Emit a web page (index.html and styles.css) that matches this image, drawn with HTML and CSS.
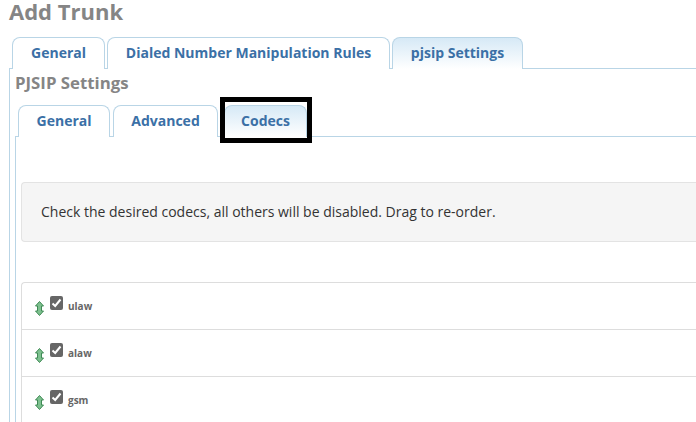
FILE: index.html
```html
<!DOCTYPE html>
<html>
<head>
<title>Add Trunk</title>
<link rel="stylesheet" href="styles.css">
</head>
<body>

<h2 class="page-title">Add Trunk</h2>

<ul class="tabs outer-tabs">
  <li class="tab tab-general">General</li>
  <li class="tab tab-dialed">Dialed Number Manipulation Rules</li>
  <li class="tab tab-pjsip active">pjsip Settings</li>
</ul>

<div class="outer-panel">
  <h3 class="panel-title">PJSIP Settings</h3>

  <ul class="tabs inner-tabs">
    <li class="tab tab-inner-general">General</li>
    <li class="tab tab-advanced">Advanced</li>
    <li class="tab tab-codecs active">Codecs<span class="highlight-box"></span></li>
  </ul>

  <div class="inner-panel">
    <div class="well">Check the desired codecs, all others will be disabled. Drag to re-order.</div>

    <ul class="codec-list">
      <li class="codec-row">
        <svg class="move-icon" viewBox="0 0 9 15"><path d="M4.500 .5 8.500 5H6.500v5h2L4.500 14.500 .5 10h2V5h-2z"/></svg>
        <span class="check"><svg viewBox="0 0 13 14"><path d="M2.500 7.500 5.200 10 10.500 3.500"/></svg></span>
        <span class="codec-name">ulaw</span>
      </li>
      <li class="codec-row">
        <svg class="move-icon" viewBox="0 0 9 15"><path d="M4.500 .5 8.500 5H6.500v5h2L4.500 14.500 .5 10h2V5h-2z"/></svg>
        <span class="check"><svg viewBox="0 0 13 14"><path d="M2.500 7.500 5.200 10 10.500 3.500"/></svg></span>
        <span class="codec-name">alaw</span>
      </li>
      <li class="codec-row">
        <svg class="move-icon" viewBox="0 0 9 15"><path d="M4.500 .5 8.500 5H6.500v5h2L4.500 14.500 .5 10h2V5h-2z"/></svg>
        <span class="check"><svg viewBox="0 0 13 14"><path d="M2.500 7.500 5.200 10 10.500 3.500"/></svg></span>
        <span class="codec-name">gsm</span>
      </li>
    </ul>
  </div>
</div>

</body>
</html>
```

FILE: styles.css
```css
:root {
  --tab-border: #b9d5e6;
  --tab-text: #3b70a6;
  --title-text: #858585;
}

html, body {
  height: 100%;
  overflow: hidden;
}

body {
  margin: 0;
  padding: 0 0 0 9px;
  background-color: #ffffff;
  font-family: "Open Sans", sans-serif;
  color: #333333;
}

.page-title {
  margin: 0;
  height: 37px;
  font-size: 22px;
  font-weight: 700;
  line-height: 23px;
  color: var(--title-text);
}

/* tabs */
.tabs {
  display: flex;
  list-style: none;
  margin: 0;
  padding: 0;
  position: relative;
  z-index: 1;
}

.tab {
  position: relative;
  box-sizing: border-box;
  height: 32px;
  margin-bottom: -1px;
  border: 1px solid var(--tab-border);
  border-bottom: 0;
  border-radius: 8px 8px 0 0;
  background-color: #ffffff;
  color: var(--tab-text);
  font-size: 14px;
  font-weight: 700;
  line-height: 30px;
  text-align: center;
}

.tab.active {
  background: linear-gradient(#d6e9f6, #ffffff);
}

.outer-tabs {
  margin-left: 3px;
  gap: 2px;
}

.tab-general { width: 93px; }
.tab-dialed { width: 283px; }
.tab-pjsip { width: 131px; }

.inner-tabs {
  margin-left: 3px;
}

.tab-inner-general { width: 92px; }
.tab-advanced { width: 105px; margin-left: 3px; }
.tab-codecs { width: 83px; margin-left: 6px; }

/* annotation drawn round the codecs tab */
.highlight-box {
  position: absolute;
  top: -9px;
  left: -5px;
  width: 92px;
  height: 46px;
  box-sizing: border-box;
  border: 5px solid #000000;
}

/* panels run off the right and bottom of the window */
.outer-panel {
  box-sizing: border-box;
  height: 354px;
  padding: 0 0 0 5px;
  border: 1px solid var(--tab-border);
  border-right: 0;
  border-bottom: 0;
}

.panel-title {
  margin: 0;
  height: 36px;
  font-size: 16.800px;
  font-weight: 700;
  line-height: 28px;
  color: var(--title-text);
}

.inner-panel {
  box-sizing: border-box;
  height: 286px;
  padding: 45px 0 0 5px;
  border: 1px solid var(--tab-border);
  border-right: 0;
  border-bottom: 0;
}

.well {
  box-sizing: border-box;
  height: 60px;
  padding: 0 19px;
  border: 1px solid #e3e3e3;
  border-right: 0;
  border-radius: 4px 0 0 4px;
  background-color: #f5f5f5;
  font-size: 14px;
  line-height: 57px;
  color: #333333;
}

/* codec list */
.codec-list {
  list-style: none;
  margin: 40px 0 0;
  padding: 0;
  border-top: 1px solid #dddddd;
  border-left: 1px solid #dddddd;
  border-radius: 4px 0 0 0;
}

.codec-row {
  display: flex;
  align-items: flex-start;
  box-sizing: border-box;
  height: 47px;
  padding: 13px 0 0 13px;
  border-bottom: 1px solid #dddddd;
}

.codec-row:last-child {
  height: 45px;
  border-bottom: 0;
}

.move-icon {
  width: 9px;
  height: 15px;
  margin-top: 5px;
  fill: #7dc08f;
  stroke: #3f8a55;
  stroke-width: 1;
}

.check {
  display: flex;
  width: 13px;
  height: 14px;
  margin-left: 6px;
  border-radius: 2px;
  background-color: #666666;
}

.check svg {
  width: 13px;
  height: 14px;
  fill: none;
  stroke: #ffffff;
  stroke-width: 2;
}

.codec-name {
  margin: 4px 0 0 5px;
  font-size: 10px;
  font-weight: 700;
  line-height: 13px;
  color: #666666;
}
```
